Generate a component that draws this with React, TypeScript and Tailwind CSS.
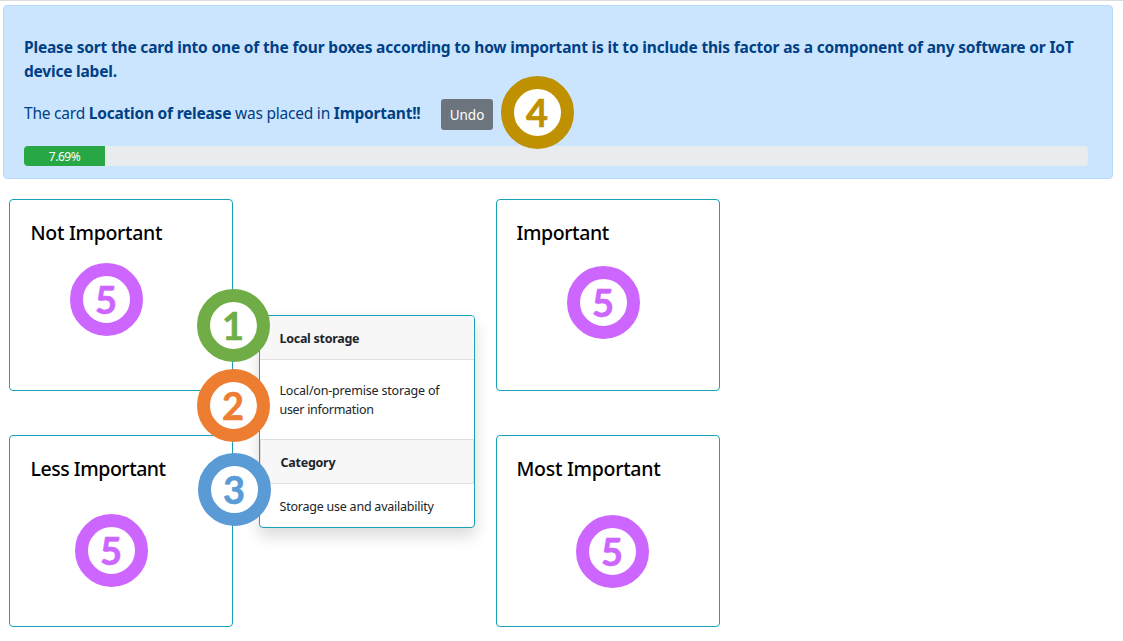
const badgeBase =
  "absolute flex size-[73px] items-center justify-center rounded-full border-[13px] bg-white pr-px pb-px font-[Lato,sans-serif] text-[38px] leading-none font-bold [-webkit-text-stroke:0.6px_currentColor]";

function Badge({ label, className }: { label: string; className: string }) {
  return <div className={`${badgeBase} ${className}`}>{label}</div>;
}

function DropBox({ title, titleClass, badgeClass }: { title: string; titleClass: string; badgeClass: string }) {
  return (
    <section className="relative h-48 w-56 rounded border border-[#17a2b8] bg-white px-[21px] pt-[21px]">
      <h5 className={`text-[19.5px] leading-6 font-medium whitespace-nowrap text-black ${titleClass}`}>{title}</h5>
      <Badge label="5" className={`border-[#cc66ff] text-[#cc66ff] ${badgeClass}`} />
    </section>
  );
}

function Instructions() {
  return (
    <div className="relative ml-[3px] mt-1 h-[174px] w-[1110px] rounded border border-[#b8daff] bg-[#cce5ff] px-5 pt-[29px] text-[#004085]">
      <p className="text-[15.5px] leading-6 font-bold">
        <span className="block whitespace-nowrap tracking-[-0.173px]">
          Please sort the card into one of the four boxes according to how important is it to include this factor as a component of any software or IoT
        </span>
        <span className="block whitespace-nowrap tracking-[-0.2px]">device label.</span>
      </p>
      <div className="mt-4 flex h-[31px] items-start">
        <p className="w-[417px] text-[15.5px] leading-[29px] whitespace-nowrap tracking-[-0.22px]">
          The card <b>Location of release</b> was placed in <b>Important!!</b>
        </p>
        <button className="h-[31px] w-[52px] rounded-[3px] bg-[#6c757d] pt-[3px] text-[13.5px] leading-none text-white">Undo</button>
      </div>
      <div className="mt-4 h-5 w-[1064px] overflow-hidden rounded bg-[#e9ecef]">
        <div className="flex h-5 w-[81px] items-center justify-center bg-[#28a745] pt-px text-[12px] tracking-[-0.45px] text-white">7.69%</div>
      </div>
      <Badge label="4" className="top-[70px] left-[497px] border-[#bf9000] text-[#bf9000]" />
    </div>
  );
}

function SortCard() {
  return (
    <article className="absolute top-[116px] left-[250px] flex h-[213px] w-[216px] flex-col rounded border border-[#17a2b8] bg-white text-[12.5px] text-[#212529] shadow-[0_8px_16px_rgba(0,0,0,0.15)]">
      <h6 className="h-11 shrink-0 rounded-t-[3px] border-b border-[#dfdfdf] bg-[#f7f7f7] pl-[19.5px] leading-[46px] font-bold tracking-[-0.28px]">Local storage</h6>
      <p className="h-[79px] shrink-0 pt-[21px] pl-[19.5px] leading-[19px] whitespace-nowrap tracking-[-0.19px]">
        Local/on-premise storage of
        <br />
        <span className="tracking-[-0.3px]">user information</span>
      </p>
      <h6 className="h-[45px] shrink-0 border border-[#dfdfdf] bg-[#f7f7f7] pl-[19.5px] leading-[45px] font-bold tracking-[-0.25px]">Category</h6>
      <p className="h-[43px] shrink-0 pl-[19.5px] leading-[45px] whitespace-nowrap tracking-[-0.23px]">Storage use and availability</p>
    </article>
  );
}

export default function App() {
  return (
    <div className="h-[641px] w-[1123px] overflow-hidden border-t border-[#dcdcdc] bg-white font-['Noto_Sans',sans-serif]">
      <Instructions />
      <main className="relative ml-[9px] mt-5 grid w-[711px] grid-cols-[224px_224px] justify-between gap-y-11">
        <DropBox title="Not Important" titleClass="tracking-[-0.3px] -ml-[0.5px]" badgeClass="top-[63px] left-[60px]" />
        <DropBox title="Important" titleClass="tracking-[-0.4px] -ml-[1.5px]" badgeClass="top-[66px] left-[70px]" />
        <DropBox title="Less Important" titleClass="tracking-[-0.46px] -ml-[0.5px]" badgeClass="top-[78px] left-[65px]" />
        <DropBox title="Most Important" titleClass="tracking-[-0.28px] -ml-[1.5px]" badgeClass="top-[79px] left-[79px]" />
        <SortCard />
        <Badge label="1" className="top-[90px] left-[188px] border-[#70ad47] text-[#70ad47]" />
        <Badge label="2" className="top-[170px] left-[188px] border-[#ed7d31] text-[#ed7d31]" />
        <Badge label="3" className="top-[254px] left-[189px] border-[#5b9bd5] text-[#5b9bd5]" />
      </main>
    </div>
  );
}
